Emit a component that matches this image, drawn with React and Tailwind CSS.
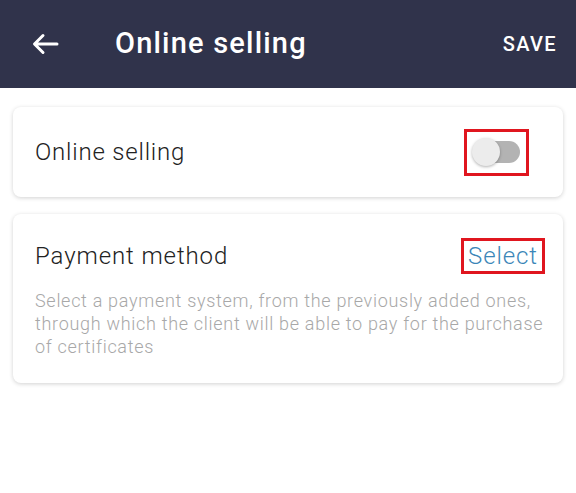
export default function App() {
  return (
    <div className="h-[493px] w-[576px] bg-white" style={{ fontFamily: 'Roboto, "Liberation Sans", sans-serif' }}>
      <header className="flex h-[88px] items-center bg-[#30334b] text-white">
        <button className="ml-[32px] flex h-[24px] w-[28px] items-center">
          <svg width="27" height="22" viewBox="0 0 27 22" fill="none" stroke="white" strokeWidth="3" strokeLinecap="round" strokeLinejoin="round">
            <path d="M25 11H3M11 2.5L2.5 11L11 19.5" />
          </svg>
        </button>
        <h1 className="ml-[55px] text-[29px] font-medium tracking-[1.2px]">Online selling</h1>
        <span className="ml-auto mr-[19px] text-[20px] font-medium tracking-[1.4px]">SAVE</span>
      </header>

      <div className="space-y-[17px] px-[13px] pt-[19px]">
        <div className="flex h-[90px] items-center rounded-[8px] bg-white px-[22px] shadow-[0_1px_4px_rgba(0,0,0,0.18)]">
          <p className="text-[24px] font-light tracking-[0.8px] text-[#222]">Online selling</p>
          <div className="ml-auto mr-[12px] flex h-[47px] w-[65px] items-center justify-center border-[3px] border-[#e0161f]">
            <div className="relative h-[22px] w-[46px] rounded-full bg-[#b3b3b3]">
              <div className="absolute -left-[2px] -top-[3px] h-[28px] w-[28px] rounded-full bg-[#ececec] shadow-[0_1px_3px_rgba(0,0,0,0.3)]" />
            </div>
          </div>
        </div>

        <div className="rounded-[8px] bg-white px-[22px] pb-[25px] pt-[24px] shadow-[0_1px_4px_rgba(0,0,0,0.18)]">
          <div className="flex items-center">
            <p className="text-[24px] font-light tracking-[0.9px] text-[#222]">Payment method</p>
            <span className="ml-auto mr-[-4px] border-[3px] border-[#e0161f] px-[4px] text-[24px] leading-[30px] font-light tracking-[0.9px] text-[#3b86b8]">Select</span>
          </div>
          <p className="mt-[15px] mr-[-6px] text-[18px] leading-[23px] font-light tracking-[0.7px] text-[#a8a8a8]">
            Select a payment system, from the previously added ones, through which the client will be able to pay for the purchase of certificates
          </p>
        </div>
      </div>
    </div>
  );
}
